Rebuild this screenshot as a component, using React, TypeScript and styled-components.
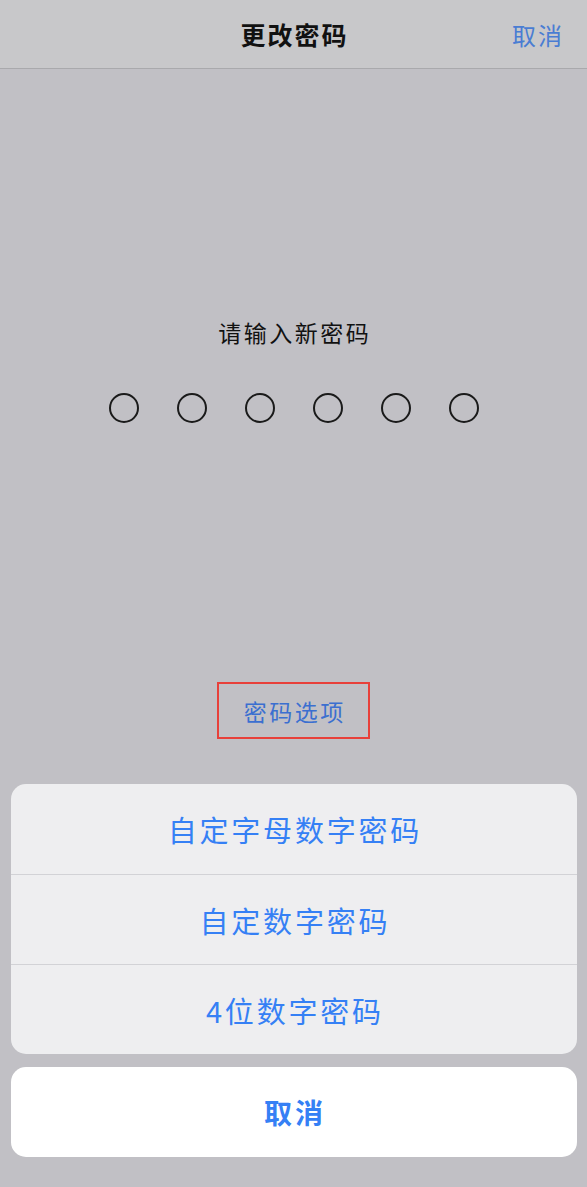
import styled, { createGlobalStyle } from "styled-components";

const GlobalStyle = createGlobalStyle`
  html, body {
    margin: 0;
    padding: 0;
    background: #c1c0c5;
  }
  body {
    font-family: "Noto Sans CJK SC", "Noto Sans", sans-serif;
  }
`;

const Page = styled.div`
  width: 587px;
  height: 1187px;
  display: flex;
  flex-direction: column;
  align-items: center;
  background: #c1c0c5;
  overflow: hidden;
`;

const Header = styled.div`
  width: 100%;
  height: 69px;
  box-sizing: border-box;
  border-bottom: 1px solid #a9a9ac;
  background: #c8c8ca;
  display: grid;
  grid-template-columns: 1fr auto 1fr;
  align-items: center;
`;

const HeaderTitle = styled.div`
  grid-column: 2;
  font-size: 25px;
  font-weight: 700;
  color: #111;
  letter-spacing: 2px;
  padding-left: 2px;
`;

const HeaderAction = styled.div`
  grid-column: 3;
  justify-self: end;
  padding-right: 23px;
  font-size: 24px;
  color: #4a7dd3;
  letter-spacing: 2px;
`;

const Prompt = styled.div`
  margin-top: 248px;
  font-size: 23px;
  line-height: 30px;
  color: #111;
  letter-spacing: 2.5px;
  padding-left: 2.5px;
`;

const Dots = styled.div`
  margin-top: 46px;
  display: flex;
  gap: 38px;
`;

const Dot = styled.div`
  width: 30px;
  height: 30px;
  box-sizing: border-box;
  border: 2px solid #1a1a1a;
  border-radius: 50%;
`;

const OptionsBox = styled.div`
  margin-top: 259px;
  width: 153px;
  height: 57px;
  box-sizing: border-box;
  border: 2px solid #e8403a;
  display: flex;
  align-items: center;
  justify-content: center;
  font-size: 23px;
  color: #3b6fd0;
  letter-spacing: 2.5px;
  padding-left: 2.5px;
`;

const Sheet = styled.div`
  margin-top: 45px;
  width: 566px;
  border-radius: 15px;
  background: #eeeef0;
  overflow: hidden;
`;

const SheetRow = styled.div<{ $first?: boolean }>`
  height: 90px;
  display: flex;
  align-items: center;
  justify-content: center;
  font-size: 29px;
  color: #3580f5;
  letter-spacing: 2.8px;
  padding-left: 2.8px;
  border-top: ${({ $first }) => ($first ? "none" : "1px solid #d2d2d6")};
  box-sizing: border-box;
`;

const CancelButton = styled.div`
  margin-top: 13px;
  width: 566px;
  height: 90px;
  border-radius: 15px;
  background: #ffffff;
  display: flex;
  align-items: center;
  justify-content: center;
  font-size: 28px;
  font-weight: 700;
  color: #3580f5;
  letter-spacing: 3px;
  padding-left: 3px;
  box-sizing: border-box;
`;

const options = ["自定字母数字密码", "自定数字密码", "4位数字密码"];

export default function App() {
  return (
    <>
      <GlobalStyle />
      <Page>
        <Header>
          <HeaderTitle>更改密码</HeaderTitle>
          <HeaderAction>取消</HeaderAction>
        </Header>
        <Prompt>请输入新密码</Prompt>
        <Dots>
          {Array.from({ length: 6 }).map((_, i) => (
            <Dot key={i} />
          ))}
        </Dots>
        <OptionsBox>密码选项</OptionsBox>
        <Sheet>
          {options.map((o, i) => (
            <SheetRow key={o} $first={i === 0}>
              {o}
            </SheetRow>
          ))}
        </Sheet>
        <CancelButton>取消</CancelButton>
      </Page>
    </>
  );
}
